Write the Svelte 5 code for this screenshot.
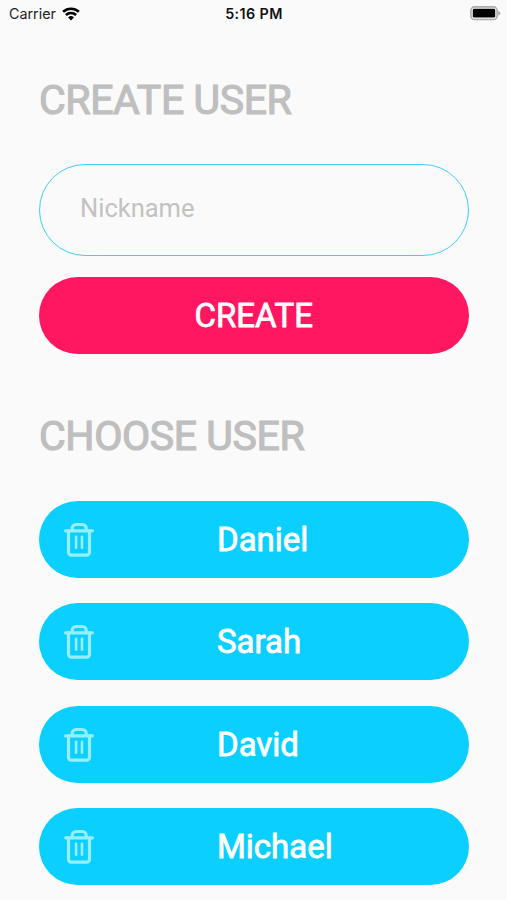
<script lang="ts">
  interface User {
    id: number;
    name: string;
  }

  let nickname = $state("");
  let users = $state<User[]>([
    { id: 1, name: "Daniel" },
    { id: 2, name: "Sarah" },
    { id: 3, name: "David" },
    { id: 4, name: "Michael" },
  ]);

  function createUser(event: SubmitEvent) {
    event.preventDefault();
    const name = nickname.trim();
    if (!name) return;
    users.push({ id: Date.now(), name });
    nickname = "";
  }

  function removeUser(id: number) {
    users = users.filter((user) => user.id !== id);
  }
</script>

<div class="screen">
  <header class="status-bar">
    <div class="carrier">
      <span>Carrier</span>
      <svg class="wifi" viewBox="0 0 18 14" aria-hidden="true">
        <path d="M1.1 4.8a11.6 11.6 0 0 1 15.8 0" />
        <path d="M3.9 8a7.4 7.4 0 0 1 10.2 0" />
        <path class="dot" d="M9 13.4 6.1 10.5a4.2 4.2 0 0 1 5.8 0z" />
      </svg>
    </div>
    <span class="time">5:16 PM</span>
    <div class="battery">
      <svg viewBox="0 0 31 15" aria-hidden="true">
        <rect class="shell" x="0.9" y="0.9" width="26.2" height="12.6" rx="3.6" />
        <rect x="2.8" y="2.8" width="22.4" height="8.8" rx="1.4" />
        <path class="tip" d="M28.2 4.9c1.4.4 2.2 1.3 2.2 2.3s-.8 1.9-2.2 2.3z" />
      </svg>
    </div>
  </header>

  <main class="content">
    <h1 class="title">CREATE USER</h1>
    <form class="create-form" onsubmit={createUser}>
      <input class="field" placeholder="Nickname" bind:value={nickname} />
      <button class="create" type="submit">CREATE</button>
    </form>

    <h1 class="title choose">CHOOSE USER</h1>
    <div class="users">
      {#each users as user (user.id)}
        <div class="user">
          <button
            class="remove"
            aria-label="Remove {user.name}"
            onclick={() => removeUser(user.id)}
          >
            <svg viewBox="0 0 30 35" aria-hidden="true">
              <path d="M1.6 8.8h26.8" />
              <path d="M8.2 8.4V6.5a4 4 0 0 1 4-4h6a4 4 0 0 1 4 4v1.9" />
              <path d="M4.5 8.8v21.4a3 3 0 0 0 3 3h15a3 3 0 0 0 3-3V8.8" />
              <path class="bars" d="M12.1 14.8v11M18 14.8v11" />
            </svg>
          </button>
          <button class="name">{user.name}</button>
        </div>
      {/each}
    </div>
  </main>
</div>

<style>
  :global(body) {
    background: #fafafa;
  }

  .screen {
    height: 900px;
    overflow: hidden;
    background: #fafafa;
    font-family: Roboto, "Liberation Sans", sans-serif;
  }

  .status-bar {
    display: grid;
    grid-template-columns: 1fr auto 1fr;
    align-items: center;
    height: 27px;
    padding: 0 6px 0 9px;
    font-family: Inter, "Liberation Sans", sans-serif;
    font-size: 14.3px;
    color: #222;
  }

  .carrier {
    display: flex;
    align-items: center;
    gap: 6px;
  }

  .wifi {
    width: 18px;
    height: 14px;
    fill: none;
    stroke: #000;
    stroke-width: 2.6;
  }

  .wifi .dot {
    fill: #000;
    stroke: none;
  }

  .time {
    padding-right: 2px;
    font-weight: 600;
    letter-spacing: 0.4px;
    color: #111;
  }

  .battery {
    display: flex;
    justify-content: flex-end;
  }

  .battery svg {
    width: 31px;
    height: 15px;
  }

  .shell {
    fill: #fafafa;
    stroke: #aaa;
    stroke-width: 1.6;
  }

  .tip {
    fill: #aaa;
  }

  .content {
    padding: 49px 38.5px 0 39px;
  }

  .title {
    margin: 0;
    height: 48px;
    font-size: 41px;
    line-height: 48px;
    font-weight: 400;
    letter-spacing: -0.4px;
    color: #bfbfbf;
    -webkit-text-stroke: 1.2px #bfbfbf;
  }

  .create-form {
    display: flex;
    flex-direction: column;
    gap: 20.5px;
    margin-top: 40px;
  }

  button {
    border: 0;
    padding: 0;
    background: none;
    font: inherit;
    color: #fff;
  }

  .field {
    box-sizing: border-box;
    width: 100%;
    height: 92px;
    padding: 0 40px 5px;
    border: 1.4px solid #3fcff8;
    border-radius: 46px;
    outline: none;
    background: transparent;
    font: inherit;
    font-size: 25.5px;
    color: #555;
  }

  .field::placeholder {
    color: #c2c2c2;
    opacity: 1;
  }

  .create {
    height: 77px;
    border-radius: 39px;
    background: #ff1761;
    font-size: 33px;
    -webkit-text-stroke: 0.8px #fff;
  }

  .choose {
    margin-top: 58.5px;
  }

  .users {
    display: flex;
    flex-direction: column;
    gap: 25.3px;
    margin-top: 41px;
  }

  .user {
    display: flex;
    align-items: center;
    flex: none;
    height: 77px;
    padding-left: 25px;
    border-radius: 39px;
    background: #0bd0ff;
  }

  .remove {
    flex: none;
    width: 30px;
    height: 35px;
  }

  .remove svg {
    display: block;
    width: 30px;
    height: 35px;
    fill: none;
    stroke: #95efff;
    stroke-width: 3.2;
    stroke-linecap: round;
    stroke-linejoin: round;
  }

  .remove .bars {
    stroke-width: 2.6;
  }

  .name {
    flex: 1;
    padding-left: 123px;
    font-size: 33px;
    text-align: left;
    -webkit-text-stroke: 0.8px #fff;
  }
</style>
